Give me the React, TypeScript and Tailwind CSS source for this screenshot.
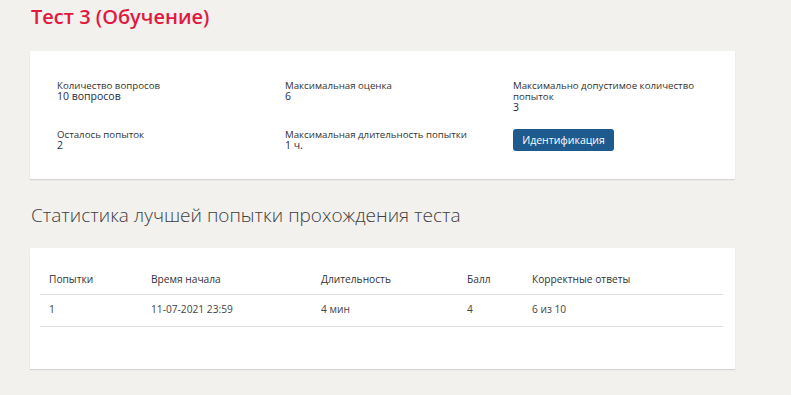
import React from "react";

const font = { fontFamily: '"Open Sans", "Noto Sans", sans-serif' };

function Field({ label, value }: { label: string; value: string }) {
  return (
    <div className="flex flex-col">
      <div className="text-[9.7px] leading-[11px] text-[#333]">{label}</div>
      <div className="text-[10.5px] leading-[11px] text-[#1e2b48]">{value}</div>
    </div>
  );
}

export default function App() {
  const cols = ["w-[102px]", "w-[170px]", "w-[146px]", "w-[65px]", ""];
  const head = ["Попытки", "Время начала", "Длительность", "Балл", "Корректные ответы"];
  const row = ["1", "11-07-2021 23:59", "4 мин", "4", "6 из 10"];
  return (
    <div className="min-h-[395px] w-full bg-[#f2f1ee] pl-[30px] pr-[56px]" style={font}>
      <h1 className="pt-[4px] pl-[1px] text-[20px] leading-[26px] font-semibold text-[#e3183d]">
        Тест 3 (Обучение)
      </h1>
      <div className="mt-[21px] bg-white shadow-[0_1px_1px_rgba(0,0,0,0.12)] pt-[29px] pb-[28px] pl-[27px]">
        <div className="grid grid-cols-[228px_228px_190px] gap-y-[16px]">
          <Field label="Количество вопросов" value="10 вопросов" />
          <Field label="Максимальная оценка" value="6" />
          <Field label="Максимально допустимое количество попыток" value="3" />
          <Field label="Осталось попыток" value="2" />
          <Field label="Максимальная длительность попытки" value="1 ч." />
          <div className="flex items-start">
            <button className="h-[22px] w-[101px] rounded-[3px] bg-[#1d5a8e] text-[10.5px] leading-[22px] text-white">
              Идентификация
            </button>
          </div>
        </div>
      </div>
      <h2 className="mt-[24px] pl-[1px] text-[19px] leading-[24px] font-light text-[#3f3f3f]">
        Статистика лучшей попытки прохождения теста
      </h2>
      <div className="mt-[21px] bg-white shadow-[0_1px_1px_rgba(0,0,0,0.12)] pt-[18px] pb-[42px] pl-[10px] pr-[12px]">
        <table className="w-full border-collapse text-[10.2px] text-[#333]">
          <thead>
            <tr className="h-[28px] border-b border-[#dcdcdc]">
              {head.map((h, i) => (
                <th key={i} className={`${cols[i]} pl-[9px] text-left font-normal`}>{h}</th>
              ))}
            </tr>
          </thead>
          <tbody>
            <tr className="h-[32px] border-b border-[#dcdcdc]">
              {row.map((c, i) => (
                <td key={i} className="pl-[9px] text-[#444]">{c}</td>
              ))}
            </tr>
          </tbody>
        </table>
      </div>
    </div>
  );
}
